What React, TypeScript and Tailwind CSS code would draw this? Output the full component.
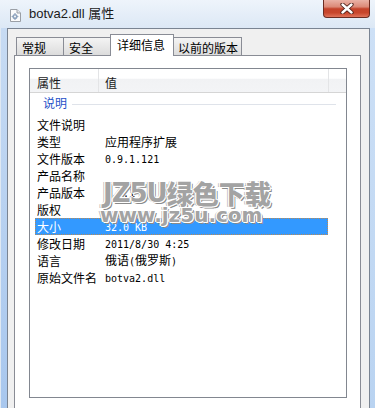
import React from "react";

const cjk = "font-['Noto_Sans_CJK_SC',sans-serif]";
const mono = "font-['DejaVu_Sans_Mono','Noto_Sans_CJK_SC',monospace] text-[10px]";

type Row = { k: string; v: React.ReactNode; sel?: boolean };

const M = ({ children }: { children: React.ReactNode }) => (
  <span className={mono}>{children}</span>
);

const rows: Row[] = [
  { k: "文件说明", v: "" },
  { k: "类型", v: "应用程序扩展" },
  { k: "文件版本", v: <M>0.9.1.121</M> },
  { k: "产品名称", v: "" },
  { k: "产品版本", v: <M>0.9.1</M> },
  { k: "版权", v: "" },
  { k: "大小", v: <M>32.0 KB</M>, sel: true },
  { k: "修改日期", v: <M>2011/8/30 4:25</M> },
  {
    k: "语言",
    v: (
      <>
        俄语<M>(</M>俄罗斯<M>)</M>
      </>
    ),
  },
  { k: "原始文件名", v: <M>botva2.dll</M> },
];

function DllIcon() {
  return (
    <svg width="11" height="13" viewBox="0 0 11 13">
      <path d="M0.5 0.5 H7 L10.5 4 V12.5 H0.5 Z" fill="#fbfbfb" stroke="#9a9fa6" />
      <path d="M7 0.5 V4 H10.5" fill="#e6e8eb" stroke="#9a9fa6" />
      <circle cx="5" cy="7.5" r="2.6" fill="#8ea3bd" />
      <circle cx="5" cy="7.5" r="1" fill="#fbfbfb" />
      <path d="M5 4.2 V5 M5 10 V10.8 M1.7 7.5 H2.5 M7.5 7.5 H8.3" stroke="#6f87a6" strokeWidth="1.2" />
    </svg>
  );
}

function CloseGlyph() {
  return (
    <svg width="14" height="11" viewBox="0 0 14 11">
      <path d="M2.5 1.5 L11.5 9.5 M11.5 1.5 L2.5 9.5" stroke="#4a1d16" strokeWidth="4.2" strokeLinecap="round" />
      <path d="M2.5 1.5 L11.5 9.5 M11.5 1.5 L2.5 9.5" stroke="#ffffff" strokeWidth="2.4" strokeLinecap="round" />
    </svg>
  );
}

export default function App() {
  return (
    <div className="relative w-[375px] h-[408px] overflow-hidden flex flex-col bg-[#b4cfee] font-['Noto_Sans_CJK_SC',sans-serif] text-[12px] text-black">
      {/* title bar */}
      <div className="h-[28px] shrink-0 flex items-start bg-[linear-gradient(to_bottom,#eef4fb,#dce8f5)]">
        <div className="ml-[10px] mt-[9px] flex">
          <DllIcon />
        </div>
        <div className="ml-[8px] mt-[5px] leading-[18px] text-[13px] text-[#1b1b1b] font-['Liberation_Sans','Noto_Sans_CJK_SC',sans-serif]">
          botva2.dll 属性
        </div>
        <div className="ml-auto mr-[5px] w-[47px] h-[18px] rounded-b-[4px] border border-t-0 border-[#6b2c22] flex items-center justify-center bg-[linear-gradient(to_bottom,#eab2a6_0%,#dc8a78_40%,#c4432b_52%,#c8462c_75%,#e0735a_100%)]">
          <CloseGlyph />
        </div>
      </div>

      {/* body */}
      <div className="flex-1 flex min-h-0">
        <div className="w-[7px] shrink-0 border-l border-[#dfe8f2] bg-[linear-gradient(to_bottom,#c7dbf3,#a8c7ee)]" />
        <div className="w-[363px] shrink-0 border border-b-0 border-[#7a8492] bg-[#f0f0f0] flex flex-col pt-[5px]">
          <div className="ml-[6px] w-[347px] flex flex-col">
            {/* tabs */}
            <div className="h-[21px] flex items-end pl-[2px]">
              <div className="w-[48px] h-[18px] border border-b-0 border-[#898c95] bg-[linear-gradient(to_bottom,#f4f4f4,#dcdcdc)] pl-[5px] pt-[1px] leading-[17px]">
                常规
              </div>
              <div className="-ml-px w-[48px] h-[18px] border border-b-0 border-[#898c95] bg-[linear-gradient(to_bottom,#f4f4f4,#dcdcdc)] pl-[5px] pt-[1px] leading-[17px]">
                安全
              </div>
              <div className="-ml-px relative z-10 -mb-px w-[64px] h-[22px] border border-b-0 border-[#898c95] bg-white pl-[6px] pt-[1px] leading-[17px]">
                详细信息
              </div>
              <div className="-ml-px w-[69px] h-[18px] border border-b-0 border-[#898c95] bg-[linear-gradient(to_bottom,#f4f4f4,#dcdcdc)] pl-[4px] pt-[1px] leading-[17px]">
                以前的版本
              </div>
            </div>

            {/* panel */}
            <div className="h-[370px] border border-[#898c95] bg-white pt-[12px] pl-[14px]">
              <div className="w-[318px] h-[330px] border border-[#828790] bg-white flex flex-col">
                {/* header */}
                <div className="h-[24px] shrink-0 flex border-b border-[#d5d5d5] bg-[linear-gradient(to_bottom,#ffffff_0%,#ffffff_40%,#f1f2f4_45%,#f3f4f6_100%)]">
                  <div className="w-[69px] border-r border-[#e3e4e6] pl-[7px] pt-[5px] leading-[17px] text-[#1a1a1a]">
                    属性
                  </div>
                  <div className="w-[230px] border-r border-[#e3e4e6] pl-[6px] pt-[5px] leading-[17px] text-[#1a1a1a]">
                    值
                  </div>
                </div>

                {/* group header */}
                <div className="h-[23px] shrink-0 flex items-start pl-[13px] pr-[10px] pt-[1px]">
                  <span className="leading-[17px] text-[#1e50c8]">说明</span>
                  <div className="flex-1 ml-[5px] mt-[10px] h-px bg-[#dfe3ea]" />
                </div>

                {/* rows */}
                <div className="flex flex-col">
                  {rows.map((r) => (
                    <div
                      key={r.k}
                      className={
                        r.sel
                          ? "ml-[5px] w-[293px] h-[17px] flex items-center bg-[#3399ff] text-white border border-dotted border-[#b98a55]"
                          : "ml-[5px] w-[293px] h-[17px] flex items-center border border-transparent"
                      }
                    >
                      <div className="w-[69px] shrink-0 pl-[1px] leading-[15px] whitespace-nowrap">{r.k}</div>
                      <div className="flex-1 leading-[15px] whitespace-nowrap">{r.v}</div>
                    </div>
                  ))}
                </div>
              </div>
            </div>
          </div>
        </div>
        <div className="flex-1 bg-[linear-gradient(to_bottom,#cde0f6,#b9d3f1)]" />
      </div>

      {/* watermark */}
      <div className="absolute left-[103px] top-[174px] pointer-events-none flex flex-col leading-none text-[#a3a3a3] [text-shadow:1px_0_0_#fff,-1px_0_0_#fff,0_1px_0_#fff,0_-1px_0_#fff,1px_1px_0_#fff,-1px_-1px_0_#fff,2px_2px_0_#8a8a8a,-2px_0_0_#bdbdbd]">
        <div className="flex items-end h-[32px]">
          <span className="font-['DejaVu_Sans',sans-serif] font-bold text-[26px] tracking-[-1px]">JZ5U</span>
          <span className={`${cjk} font-black text-[26px]`}>绿色下载</span>
        </div>
        <div className="-ml-[3px] mt-[-2px] font-['DejaVu_Sans',sans-serif] font-bold text-[20px] leading-[22px]">
          www.jz5u.com
        </div>
      </div>
    </div>
  );
}
